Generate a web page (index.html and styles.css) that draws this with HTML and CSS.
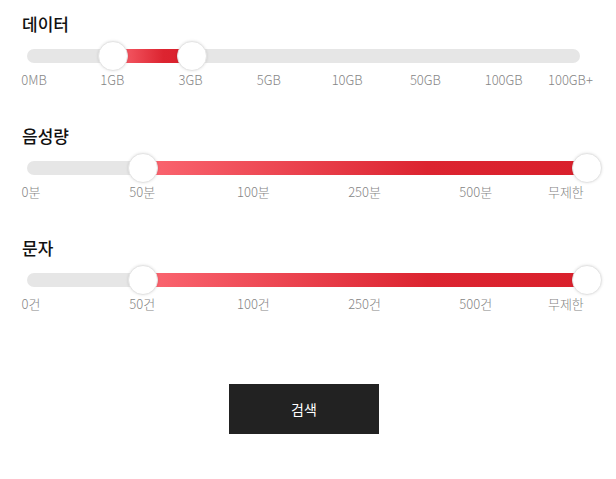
FILE: index.html
```html
<!DOCTYPE html>
<html lang="ko">
<head>
<meta charset="utf-8">
<title>요금제 검색</title>
<link rel="stylesheet" href="styles.css">
</head>
<body>
<div class="filter">
  <section class="group">
    <h3 class="title">데이터</h3>
    <div class="slider">
      <div class="track"><div class="fill" style="left:86px;width:79px"></div></div>
      <span class="thumb" style="left:86px"></span>
      <span class="thumb" style="left:165px"></span>
    </div>
    <div class="ticks ticks-data">
      <span class="tick"><span>0MB</span></span>
      <span class="tick"><span>1GB</span></span>
      <span class="tick"><span>3GB</span></span>
      <span class="tick"><span>5GB</span></span>
      <span class="tick"><span>10GB</span></span>
      <span class="tick"><span>50GB</span></span>
      <span class="tick"><span>100GB</span></span>
      <span class="tick tick-last"><span>100GB+</span></span>
    </div>
  </section>

  <section class="group">
    <h3 class="title">음성량</h3>
    <div class="slider">
      <div class="track"><div class="fill" style="left:116px;width:444px"></div></div>
      <span class="thumb" style="left:116px"></span>
      <span class="thumb" style="left:560px"></span>
    </div>
    <div class="ticks ticks-six">
      <span class="tick"><span>0분</span></span>
      <span class="tick"><span>50분</span></span>
      <span class="tick"><span>100분</span></span>
      <span class="tick"><span>250분</span></span>
      <span class="tick"><span>500분</span></span>
      <span class="tick tick-last"><span>무제한</span></span>
    </div>
  </section>

  <section class="group">
    <h3 class="title">문자</h3>
    <div class="slider">
      <div class="track"><div class="fill" style="left:116px;width:444px"></div></div>
      <span class="thumb" style="left:116px"></span>
      <span class="thumb" style="left:560px"></span>
    </div>
    <div class="ticks ticks-six">
      <span class="tick"><span>0건</span></span>
      <span class="tick"><span>50건</span></span>
      <span class="tick"><span>100건</span></span>
      <span class="tick"><span>250건</span></span>
      <span class="tick"><span>500건</span></span>
      <span class="tick tick-last"><span>무제한</span></span>
    </div>
  </section>

  <div class="actions">
    <button class="search" type="button">검색</button>
  </div>
</div>
</body>
</html>
```

FILE: styles.css
```css
* { box-sizing: border-box; }

html, body {
  margin: 0;
  padding: 0;
  background: #fff;
}

body {
  font-family: "Noto Sans CJK KR", "Noto Sans", sans-serif;
  color: #111;
}

.filter {
  width: 564px;
  margin-left: 22px;
  padding-top: 12px;
}

.group {
  height: 77px;
  margin-bottom: 35px;
}

.title {
  margin: 0 0 5px;
  font-size: 17px;
  line-height: 24px;
  font-weight: 500;
  color: #111;
}

.slider {
  position: relative;
  height: 30px;
  margin: 0 6px 0 5px;
  display: flex;
  align-items: center;
}

.track {
  position: relative;
  width: 100%;
  height: 14px;
  border-radius: 7px;
  background: #e6e6e6;
  overflow: hidden;
}

.fill {
  position: absolute;
  top: 0;
  bottom: 0;
  background: linear-gradient(to right, #fb6671 0%, #dc2430 64%, #d9202c 100%);
}

.thumb {
  position: absolute;
  top: 0;
  width: 30px;
  height: 30px;
  margin-left: -15px;
  border-radius: 50%;
  background: #fff;
  border: 1px solid #e4e4e4;
  box-shadow: 0 0 3px rgba(0, 0, 0, 0.12);
}

.ticks {
  display: flex;
  justify-content: space-between;
  height: 18px;
  font-size: 13px;
  line-height: 18px;
  color: #858585;
  font-weight: 300;
}

.ticks-data {
  margin: 0 4px 0 12px;
}

.ticks-six {
  margin: 0 -1px 0 9px;
}

.tick {
  flex: 0 0 0px;
  width: 0;
  min-width: 0;
  display: flex;
  justify-content: center;
  white-space: nowrap;
}

.tick-last {
  justify-content: flex-start;
}

.ticks-data .tick-last span {
  margin-left: -34px;
}

.ticks-six .tick-last span {
  margin-left: -39px;
}

.actions {
  display: flex;
  justify-content: center;
  padding-top: 36px;
}

.search {
  width: 150px;
  height: 50px;
  border: 0;
  border-radius: 0;
  background: #222;
  color: #fff;
  font-family: "Noto Sans CJK KR", "Noto Sans", sans-serif;
  font-size: 14px;
  font-weight: 400;
  cursor: pointer;
}
```
